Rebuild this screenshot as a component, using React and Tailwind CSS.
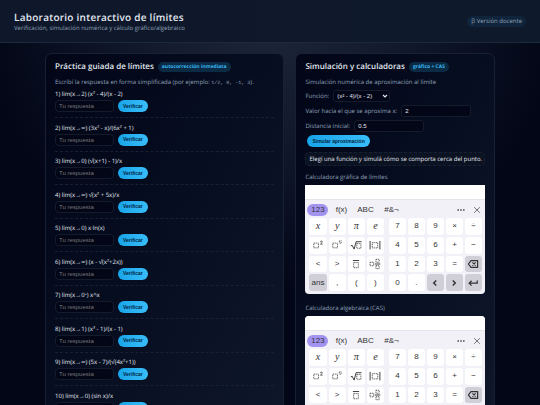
import React, { useState } from 'react';

const exercises = [
  'lim(x→2) (x² - 4)/(x - 2)',
  'lim(x→∞) (3x² - x)/(6x² + 1)',
  'lim(x→0) (√(x+1) - 1)/x',
  'lim(x→∞) √(x² + 5x)/x',
  'lim(x→0) x·ln(x)',
  'lim(x→∞) (x - √(x²+2x))',
  'lim(x→0⁺) x^x',
  'lim(x→1) (x³ - 1)/(x - 1)',
  'lim(x→∞) (5x - 7)/(√(4x²+1))',
  'lim(x→0) (sin x)/x',
];

const functions = ['(x² - 4)/(x - 2)', '(sin x)/x', '(√(x+1) - 1)/x'];

// Dashed placeholder box used by the template keys
const Box = ({ x, y, w, h }) => (
  <rect x={x} y={y} width={w} height={h} strokeDasharray="1.3 0.7" strokeWidth="0.8" />
);

const KeyIcon = ({ children, label }) => (
  <svg viewBox="0 0 17 17" className="size-[16px] shrink-0" fill="none" stroke="#333" strokeWidth="1" role="img" aria-label={label}>
    {children}
  </svg>
);

const icons = {
  square: (
    <KeyIcon label="cuadrado">
      <Box x={4} y={6.5} w={5} h={5} />
      <path d="M11 5.4c.1-1.5 2.2-1.4 2.1-.1 0 .8-1.4 1.3-2.1 2.3h2.4" strokeWidth="0.8" />
    </KeyIcon>
  ),
  power: (
    <KeyIcon label="potencia">
      <Box x={4} y={6.5} w={5} h={5} />
      <rect x="11" y="4" width="2" height="2.6" strokeDasharray="0.9 0.7" strokeWidth="0.8" />
    </KeyIcon>
  ),
  sqrt: (
    <KeyIcon label="raíz">
      <path d="M3 9.5l1.4-.8 2.1 4.2L8.6 5h5.8" strokeWidth="1" />
      <Box x={9.3} y={7} w={4.4} h={5} />
    </KeyIcon>
  ),
  abs: (
    <KeyIcon label="valor absoluto">
      <path d="M3.3 4.2v9M13.7 4.2v9" />
      <Box x={5.6} y={6} w={5.8} h={5.6} />
    </KeyIcon>
  ),
  fraction: (
    <KeyIcon label="fracción">
      <path d="M5.2 4.8h6.6" />
      <Box x={6} y={7} w={5} h={5.5} />
    </KeyIcon>
  ),
  mixed: (
    <KeyIcon label="número mixto">
      <Box x={3.2} y={6.6} w={3.8} h={3.8} />
      <Box x={9.5} y={3.5} w={3.4} h={3.2} />
      <Box x={9.5} y={10.3} w={3.4} h={3.2} />
      <path d="M8.2 8.5h6" />
    </KeyIcon>
  ),
  left: (
    <KeyIcon label="izquierda">
      <path d="M9.8 5.8L7.1 8.5l2.7 2.7" strokeWidth="1.5" />
    </KeyIcon>
  ),
  right: (
    <KeyIcon label="derecha">
      <path d="M7.2 5.8l2.7 2.7-2.7 2.7" strokeWidth="1.5" />
    </KeyIcon>
  ),
  enter: (
    <KeyIcon label="intro">
      <path d="M13 5.8v2.9H4.8M7 6.1L4.4 8.7 7 11.3" strokeWidth="1.3" />
    </KeyIcon>
  ),
  backspace: (
    <KeyIcon label="borrar">
      <path d="M6.4 4.8h7v7.4h-7L3.6 8.5z" strokeWidth="1.3" strokeLinejoin="round" />
      <path d="M7.9 6.8l3.4 3.4M11.3 6.8l-3.4 3.4" strokeWidth="1.2" />
    </KeyIcon>
  ),
};

const leftKeys = ['x', 'y', 'π', 'e', 'square', 'power', 'sqrt', 'abs', '<', '>', 'fraction', 'mixed', 'ans', ',', '(', ')'];
const rightKeys = [
  '7', '8', '9', '×', '÷',
  '4', '5', '6', '+', '−',
  '1', '2', '3', '=', 'backspace',
  '0', '.', 'left', 'right', 'enter',
];
const serifKeys = ['x', 'y', 'π', 'e'];
const darkKeys = ['ans', 'backspace', 'left', 'right', 'enter'];

const Key = ({ name }) => (
  <button
    type="button"
    className={`flex items-center justify-center overflow-hidden rounded-[3px] leading-none text-[#333] ${
      darkKeys.includes(name) ? 'bg-[#d0cfd8]' : 'bg-white'
    } ${serifKeys.includes(name) ? "font-['Liberation_Serif',serif] text-[10px] italic" : 'text-[8px]'}`}
  >
    {icons[name] || name}
  </button>
);

const Calculator = ({ title, className }) => (
  <section>
    <h3 className="text-[6px] leading-[10px] text-slate-400">{title}</h3>
    <div className={`mt-[3px] overflow-hidden bg-[#f2f1f8] font-['Liberation_Sans',sans-serif] ${className}`}>
      <div className="h-[15px] border-b border-[#e4e4ea] bg-white" />
      <div className="flex items-center pt-[4px] pr-[4px] pl-[2px] text-[8px] leading-[12px] text-[#333]">
        <button type="button" className="w-[21px] rounded-full bg-[#a393f0]">123</button>
        <button type="button" className="ml-[6px] w-[14px]">f(x)</button>
        <button type="button" className="ml-[8px] w-[18px]">ABC</button>
        <button type="button" className="ml-[8px] w-[18px]">#&amp;¬</button>
        <button type="button" aria-label="Más" className="ml-auto">
          <svg viewBox="0 0 8 8" className="size-[8px]" fill="#666">
            <circle cx="1.2" cy="4" r="0.9" />
            <circle cx="4" cy="4" r="0.9" />
            <circle cx="6.8" cy="4" r="0.9" />
          </svg>
        </button>
        <button type="button" aria-label="Cerrar" className="ml-[8px]">
          <svg viewBox="0 0 8 8" className="size-[8px]" fill="none" stroke="#666" strokeWidth="0.9">
            <path d="M1.2 1.2l5.6 5.6M6.8 1.2L1.2 6.8" />
          </svg>
        </button>
      </div>
      <div className="flex gap-[5px] pt-[2px] pr-[3px] pb-[3px] pl-[4px]">
        <div className="grid min-h-[73px] flex-4 auto-rows-fr grid-cols-4 gap-[2px]">
          {leftKeys.map((k) => <Key key={k} name={k} />)}
        </div>
        <div className="grid min-h-[73px] flex-5 auto-rows-fr grid-cols-5 gap-[2px]">
          {rightKeys.map((k) => <Key key={k} name={k} />)}
        </div>
      </div>
    </div>
  </section>
);

const Badge = ({ children }) => (
  <span className="rounded-full bg-[#0b2a43] px-[4px] text-[5px] leading-[10px] font-bold text-[#38b6f2]">
    {children}
  </span>
);

const Exercise = ({ number, text }) => {
  const [answer, setAnswer] = useState('');
  const id = `ejercicio-${number}`;

  return (
    <li>
      <div className="border-b border-dashed border-[#172133] pb-[5px]">
        <label htmlFor={id} className="block text-[6px] leading-[10px]">{number}) {text}</label>
        <div className="mt-px flex items-center gap-[4px]">
          <input
            id={id}
            type="text"
            placeholder="Tu respuesta"
            value={answer}
            onChange={(e) => setAnswer(e.target.value)}
            className="h-[12px] w-[59px] rounded-[4px] border border-[#141c2c] bg-[#020617] px-[3px] font-['Liberation_Sans',sans-serif] text-[6px] placeholder:text-[#757575]"
          />
          <button type="button" className="h-[12px] rounded-full bg-linear-to-r from-[#16a5e9] to-[#38bdf8] px-[5px] font-['Liberation_Sans',sans-serif] text-[5px] leading-none font-bold text-[#02243d]">
            Verificar
          </button>
        </div>
      </div>
    </li>
  );
};

const fieldClass =
  "h-[12px] rounded-[3px] border border-[#141c2c] bg-[#020617] px-[3px] font-['Liberation_Sans',sans-serif] text-[6px] text-slate-200";
const cardClass =
  'rounded-[7px] border border-[#172133] bg-linear-to-br from-[#020617] to-[#0f172a] px-[9px] pt-[8px] pb-[12px]';

const App = () => {
  const [fn, setFn] = useState(functions[0]);
  const [point, setPoint] = useState('2');
  const [distance, setDistance] = useState('0.5');

  return (
    <div className="min-h-screen bg-[#020617] bg-[radial-gradient(circle_at_top,#1e293b_0,#020617_55%)] font-['Open_Sans','Noto_Sans',sans-serif] text-slate-200 [text-rendering:geometricPrecision]">
      <header className="flex items-center justify-between border-b border-[#1b2a3b] bg-linear-to-r from-[#0f172a] to-[#0e1a2b] px-[14px] pt-[10px] pb-[9px]">
        <div>
          <h1 className="text-[10px] leading-[14px] font-semibold tracking-wide">Laboratorio interactivo de límites</h1>
          <p className="text-[6px] leading-[9px] text-slate-400">Verificación, simulación numérica y cálculo gráfico/algebraico</p>
        </div>
        <span className="rounded-full bg-[#10253b] px-[4px] text-[6px] leading-[11px] text-slate-400">β Versión docente</span>
      </header>

      <main className="mx-auto grid max-w-[450px] grid-cols-[minmax(0,6fr)_minmax(0,5fr)] items-start gap-[11px] pt-[10px] pb-[20px]">
        <section className={cardClass}>
          <div className="flex items-center gap-[4px]">
            <h2 className="text-[8px] leading-[10px] font-semibold">Práctica guiada de límites</h2>
            <Badge>autocorrección inmediata</Badge>
          </div>
          <p className="mt-[5px] text-[6px] leading-[10px] text-slate-400">
            Escribí la respuesta en forma simplificada (por ejemplo: <code className="font-['Liberation_Mono',monospace] text-[5px]">1/2, 0, -1, 3</code>).
          </p>
          <ol className="mt-px grid min-h-[335px] auto-rows-fr">
            {exercises.map((text, i) => <Exercise key={text} number={i + 1} text={text} />)}
          </ol>
        </section>

        <section className={cardClass}>
          <div className="flex items-center gap-[4px]">
            <h2 className="text-[8px] leading-[10px] font-semibold">Simulación y calculadoras</h2>
            <Badge>gráfico + CAS</Badge>
          </div>
          <h3 className="mt-[5px] text-[6px] leading-[10px] text-slate-400">Simulación numérica de aproximación al límite</h3>
          <form className="mt-[3px] flex flex-col items-start gap-[3px] text-[6px] text-slate-400" onSubmit={(e) => e.preventDefault()}>
            <div className="flex h-[12px] items-center gap-[4px]">
              <label htmlFor="funcion">Función:</label>
              <div className="relative flex">
                <select id="funcion" value={fn} onChange={(e) => setFn(e.target.value)} className={`${fieldClass} w-[57px] appearance-none`}>
                  {functions.map((f) => <option key={f}>{f}</option>)}
                </select>
                <svg viewBox="0 0 6 6" className="pointer-events-none absolute top-[3px] right-[2px] size-[6px]" fill="none" stroke="#e2e8f0" strokeWidth="1.2">
                  <path d="M1 2l2 2 2-2" />
                </svg>
              </div>
            </div>
            <div className="flex h-[12px] items-center gap-[4px]">
              <label htmlFor="punto">Valor hacia el que se aproxima x:</label>
              <input id="punto" type="text" value={point} onChange={(e) => setPoint(e.target.value)} className={`${fieldClass} w-[70px]`} />
            </div>
            <div className="flex h-[12px] items-center gap-[4px]">
              <label htmlFor="distancia">Distancia inicial:</label>
              <input id="distancia" type="text" value={distance} onChange={(e) => setDistance(e.target.value)} className={`${fieldClass} w-[70px]`} />
            </div>
            <button type="submit" className="ml-[2px] h-[12px] rounded-full bg-linear-to-r from-[#16a5e9] to-[#38bdf8] px-[5px] font-['Liberation_Sans',sans-serif] text-[5px] leading-none font-bold text-[#02243d]">
              Simular aproximación
            </button>
          </form>
          <p className="mt-[5px] mb-[6px] rounded-[4px] border border-dashed border-[#172133] bg-[#0b1222] px-[3px] text-[6px] leading-[12px] whitespace-nowrap">
            Elegí una función y simulá cómo se comporta cerca del punto.
          </p>
          <div className="flex flex-col gap-[9px]">
            <Calculator title="Calculadora gráfica de límites" className="rounded-b-[4px]" />
            <Calculator title="Calculadora algebraica (CAS)" className="rounded-[4px]" />
          </div>
        </section>
      </main>
    </div>
  );
};

export default App;
